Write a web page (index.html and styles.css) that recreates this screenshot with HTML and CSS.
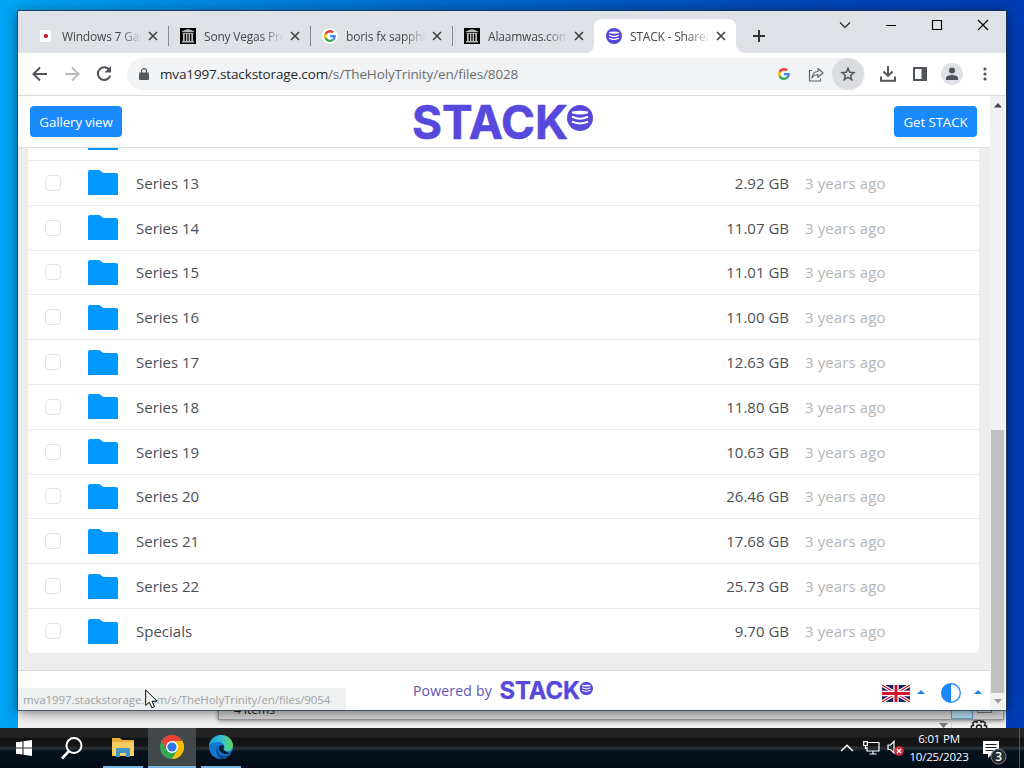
FILE: index.html
```html
<!DOCTYPE html>
<html lang="en">
  <head>
    <meta charset="utf-8">
    <title>STACK - Shared files</title>
    <link rel="stylesheet" href="styles.css">
  </head>
  <body>
    <!-- shared icons -->
    <svg class="defs" width="0" height="0">
      <symbol id="disc" viewBox="0 0 26 26">
        <circle cx="13" cy="13" r="13" fill="#5749dc"/>
        <path d="M5 6.500Q13 4.800 21 6.500V8.200Q13 10.600 5 8.200Z" fill="#fff"/>
        <path d="M5 11.800L9.500 13.300Q13 14 16.500 13.300L21 11.800M5 16.600L9.500 18.100Q13 18.800 16.500 18.100L21 16.600" fill="none" stroke="#fff" stroke-width="2"/>
      </symbol>
      <symbol id="logo" viewBox="0 0 180 36">
        <text x="-1" y="34.500" textLength="156" lengthAdjust="spacingAndGlyphs" font-family="Inter, Liberation Sans, sans-serif" font-weight="700" font-size="47" fill="#5749dc" stroke="#5749dc" stroke-width=".6">STACK</text>
        <use href="#disc" x="154" y="1" width="26" height="26"/>
      </symbol>
      <symbol id="folder" viewBox="0 0 30 25">
        <path d="M0 25V2Q0 0 2 0H10.500Q12 0 13 1.300T16 3H28Q30 3 30 5V25Z" fill="#0098ff"/>
      </symbol>
      <symbol id="close" viewBox="0 0 10 10">
        <path d="M1 1L9 9M9 1L1 9" stroke="#3c4043" stroke-width="1.600"/>
      </symbol>
      <symbol id="archive" viewBox="0 0 16 16">
        <path d="M0 0H16V16H0Z" fill="#000"/>
        <path d="M8 1L14 3.300V4H2V3.300ZM2.500 4.700H13.500V5.700H2.500ZM3 5.500H4.700V13H3ZM6 5.500H7.400V13H6ZM8.600 5.500H10V13H8.600ZM11.300 5.500H13V13H11.300ZM2 13H14V14.500H2Z" fill="#bbb"/>
      </symbol>
      <symbol id="google" viewBox="0 0 48 48">
        <path fill="#ea4335" d="M24 9.500c3.500 0 6.700 1.200 9.200 3.600l6.900-6.900C35.900 2.400 30.500 0 24 0 14.600 0 6.500 5.400 2.600 13.200l8 6.200C12.400 13.700 17.700 9.500 24 9.500z"/>
        <path fill="#4285f4" d="M47 24.500c0-1.600-.2-3.100-.4-4.500H24v9h12.900c-.6 3-2.300 5.500-4.800 7.200l7.700 6C44.400 38 47 31.800 47 24.500z"/>
        <path fill="#fbbc05" d="M10.500 28.600a14 14 0 0 1 0-9.200l-8-6.200a24 24 0 0 0 0 21.600z"/>
        <path fill="#34a853" d="M24 48c6.500 0 11.900-2.100 15.900-5.800l-7.700-6c-2.200 1.500-4.900 2.300-8.200 2.300-6.300 0-11.600-4.200-13.500-9.900l-8 6.200C6.500 42.600 14.600 48 24 48z"/>
      </symbol>
    </svg>

    <div class="explorer">
      <div class="explorer-front">
        <span class="items">4 items</span>
        <span class="view-details"></span>
        <span class="view-icons"></span>
      </div>
      <svg class="explorer-tools" width="66" height="24" viewBox="0 0 66 24">
        <path d="M0 3H9L4.500 8Z" fill="#777"/>
        <path d="M12.500 0V24" stroke="#ccc"/>
        <path d="M38.500 0h3l.6 2.200 2.100-1 2.200 2.200-1 2.100 2.200.6v3l-2.200.6 1 2.100-2.200 2.200-2.100-1-.6 2h-3l-.6-2-2.100 1-2.200-2.200 1-2.100-2.200-.6v-3l2.200-.6-1-2.100 2.200-2.200 2.100 1z" fill="none" stroke="#222" stroke-width="1.500"/>
        <circle cx="40" cy="7.500" r="2.500" fill="none" stroke="#222" stroke-width="1.500"/>
      </svg>
    </div>

    <div class="window">
      <div class="tabstrip">
        <div class="tab">
          <svg width="16" height="16"><path d="M2 2H13V14H2Z" fill="#fff"/><circle cx="8" cy="8" r="2.100" fill="#c8102e"/></svg>
          <span class="tab-title">Windows 7 Games</span>
          <svg width="10" height="10"><use href="#close"/></svg>
        </div>
        <div class="tab line">
          <svg width="16" height="16"><use href="#archive"/></svg>
          <span class="tab-title">Sony Vegas Pro 13</span>
          <svg width="10" height="10"><use href="#close"/></svg>
        </div>
        <div class="tab line">
          <svg width="16" height="16"><circle cx="8" cy="8" r="8" fill="#fff"/><use href="#google" x="2" y="2" width="12" height="12"/></svg>
          <span class="tab-title">boris fx sapphire</span>
          <svg width="10" height="10"><use href="#close"/></svg>
        </div>
        <div class="tab line">
          <svg width="16" height="16"><use href="#archive"/></svg>
          <span class="tab-title">Alaamwas.com</span>
          <svg width="10" height="10"><use href="#close"/></svg>
        </div>
        <div class="tab active">
          <svg width="16" height="16"><use href="#disc"/></svg>
          <span class="tab-title">STACK - Shared</span>
          <svg width="10" height="10"><use href="#close"/></svg>
        </div>
        <svg class="newtab" width="12" height="12"><path d="M6 0V12M0 6H12" stroke="#333" stroke-width="2"/></svg>
        <div class="controls">
          <svg width="12" height="12"><path d="M1 3.500L6 8.500L11 3.500" fill="none" stroke="#222" stroke-width="1.100"/></svg>
          <svg width="12" height="12"><path d="M1 6.500H11" stroke="#000"/></svg>
          <svg width="12" height="12"><path d="M1.500 1.500H10.500V10.500H1.500Z" fill="none" stroke="#000" stroke-width="1.200"/></svg>
          <svg width="12" height="12"><path d="M1 1L11 11M11 1L1 11" stroke="#000" stroke-width="1.200"/></svg>
        </div>
      </div>

      <div class="toolbar">
        <svg class="nav" width="16" height="16"><path d="M15 8H2M8 1.500L1.500 8L8 14.500" fill="none" stroke="#505357" stroke-width="2"/></svg>
        <svg class="nav" width="16" height="16"><path d="M1 8H14M8 1.500L14.500 8L8 14.500" fill="none" stroke="#babcbe" stroke-width="2"/></svg>
        <svg class="nav" width="16" height="16"><path d="M13.300 4A6.300 6.300 0 1 0 14.200 9.500" fill="none" stroke="#505357" stroke-width="2"/><path d="M15 0V6.500H8.500Z" fill="#505357"/></svg>
        <div class="address">
          <svg class="lock" width="10" height="12"><path d="M1 4.500H9Q10 4.500 10 5.500V11Q10 12 9 12H1Q0 12 0 11V5.500Q0 4.500 1 4.500Z" fill="#55585c"/><path d="M2.500 5V3a2.500 2.300 0 0 1 5 0V5" fill="none" stroke="#55585c" stroke-width="1.300"/></svg>
          <span class="url"><b>mva1997.stackstorage.com</b>/s/TheHolyTrinity/en/files/8028</span>
          <svg class="g" width="12" height="12"><use href="#google"/></svg>
          <svg class="share" width="16" height="15"><path d="M4 3.500H1.500V14H12.500V11.500" fill="none" stroke="#5f6368" stroke-width="1.200"/><path d="M4 11C4.500 7 6.500 4.500 10 4.500V1.500L15 6L10 10.300V7.500C7.500 7.500 5.500 8.500 4 11Z" fill="none" stroke="#5f6368" stroke-width="1.200" stroke-linejoin="round"/></svg>
          <span class="star"><svg width="16" height="16"><path d="M8 2.200L9.700 6.200L14 6.600L10.700 9.400L11.700 13.600L8 11.300L4.300 13.600L5.300 9.400L2 6.600L6.300 6.200Z" fill="none" stroke="#55585c" stroke-width="1.500"/></svg></span>
        </div>
        <svg class="download" width="16" height="16"><path d="M8 0V9M3.500 5.500L8 10L12.500 5.500M1 10.500V14.800H15V10.500" fill="none" stroke="#505357" stroke-width="1.900"/></svg>
        <svg class="panel" width="14" height="14"><path d="M1 1H13V13H1Z" fill="none" stroke="#505357" stroke-width="2"/><path d="M8.500 1H13V13H8.500Z" fill="#505357"/></svg>
        <svg class="avatar" width="22" height="22"><circle cx="11" cy="11" r="11" fill="#dee1e6"/><circle cx="11" cy="7.600" r="3" fill="#505357"/><path d="M5 17V14.800Q6 12 11 12T17 14.800V17Z" fill="#505357"/></svg>
        <svg class="dots" width="4" height="14"><g fill="#505357"><circle cx="2" cy="2" r="1.600"/><circle cx="2" cy="7" r="1.600"/><circle cx="2" cy="12" r="1.600"/></g></svg>
      </div>

      <div class="viewport">
        <div class="page">
          <div class="header">
            <button class="btn gallery">Gallery view</button>
            <svg class="brand" width="180" height="36"><use href="#logo"/></svg>
            <button class="btn get">Get STACK</button>
          </div>
          <div class="content">
            <div class="files">
              <div class="row cut">
                <svg class="folder" width="30" height="25"><use href="#folder"/></svg>
              </div>
              <div class="row">
                <span class="check"></span><svg class="folder" width="30" height="25"><use href="#folder"/></svg>
                <span class="name">Series 13</span><span class="size">2.92 GB</span><span class="date">3 years ago</span>
              </div>
              <div class="row">
                <span class="check"></span><svg class="folder" width="30" height="25"><use href="#folder"/></svg>
                <span class="name">Series 14</span><span class="size">11.07 GB</span><span class="date">3 years ago</span>
              </div>
              <div class="row">
                <span class="check"></span><svg class="folder" width="30" height="25"><use href="#folder"/></svg>
                <span class="name">Series 15</span><span class="size">11.01 GB</span><span class="date">3 years ago</span>
              </div>
              <div class="row">
                <span class="check"></span><svg class="folder" width="30" height="25"><use href="#folder"/></svg>
                <span class="name">Series 16</span><span class="size">11.00 GB</span><span class="date">3 years ago</span>
              </div>
              <div class="row">
                <span class="check"></span><svg class="folder" width="30" height="25"><use href="#folder"/></svg>
                <span class="name">Series 17</span><span class="size">12.63 GB</span><span class="date">3 years ago</span>
              </div>
              <div class="row">
                <span class="check"></span><svg class="folder" width="30" height="25"><use href="#folder"/></svg>
                <span class="name">Series 18</span><span class="size">11.80 GB</span><span class="date">3 years ago</span>
              </div>
              <div class="row">
                <span class="check"></span><svg class="folder" width="30" height="25"><use href="#folder"/></svg>
                <span class="name">Series 19</span><span class="size">10.63 GB</span><span class="date">3 years ago</span>
              </div>
              <div class="row">
                <span class="check"></span><svg class="folder" width="30" height="25"><use href="#folder"/></svg>
                <span class="name">Series 20</span><span class="size">26.46 GB</span><span class="date">3 years ago</span>
              </div>
              <div class="row">
                <span class="check"></span><svg class="folder" width="30" height="25"><use href="#folder"/></svg>
                <span class="name">Series 21</span><span class="size">17.68 GB</span><span class="date">3 years ago</span>
              </div>
              <div class="row">
                <span class="check"></span><svg class="folder" width="30" height="25"><use href="#folder"/></svg>
                <span class="name">Series 22</span><span class="size">25.73 GB</span><span class="date">3 years ago</span>
              </div>
              <div class="row">
                <span class="check"></span><svg class="folder" width="30" height="25"><use href="#folder"/></svg>
                <span class="name">Specials</span><span class="size">9.70 GB</span><span class="date">3 years ago</span>
              </div>
            </div>
          </div>
          <div class="footer">
            <span class="powered">Powered by</span>
            <svg class="brand-small" width="93" height="19"><use href="#logo"/></svg>
            <div class="settings">
              <svg width="28" height="17" viewBox="0 0 28 17">
                <path d="M0 0H28V17H0Z" fill="#20205f"/>
                <path d="M0 0L28 17M28 0L0 17" stroke="#fff" stroke-width="3.400"/>
                <path d="M0 0L28 17M28 0L0 17" stroke="#d0142c" stroke-width="1.200"/>
                <path d="M14 0V17M0 8.500H28" stroke="#fff" stroke-width="5.400"/>
                <path d="M14 0V17M0 8.500H28" stroke="#d0142c" stroke-width="3"/>
              </svg>
              <svg class="caret" width="8" height="4"><path d="M0 4L4 0L8 4Z" fill="#1c86e0"/></svg>
              <svg class="contrast" width="20" height="20"><circle cx="10" cy="10" r="9.300" fill="#fff" stroke="#1c88ff" stroke-width="1.300"/><path d="M10 .5A9.500 9.500 0 0 0 10 19.500Z" fill="#1c88ff"/></svg>
              <svg class="caret" width="8" height="4"><path d="M0 4L4 0L8 4Z" fill="#1c86e0"/></svg>
            </div>
          </div>
        </div>
        <div class="scrollbar">
          <svg width="8" height="5"><path d="M0 4.500L4 0L8 4.500Z" fill="#444"/></svg>
          <div class="thumb"></div>
          <svg width="8" height="5"><path d="M0 0L4 4.500L8 0Z" fill="#999"/></svg>
        </div>
      </div>
      <div class="status">mva1997.stackstorage.com/s/TheHolyTrinity/en/files/9054</div>
    </div>

    <div class="taskbar">
      <svg class="start" width="16" height="16"><path d="M0 2.300L6.500 1.400V7.500H0ZM7.500 1.200L16 0V7.500H7.500ZM0 8.500H6.500V14.600L0 13.700ZM7.500 8.500H16V16L7.500 14.800Z" fill="#fff"/></svg>
      <svg class="search" width="24" height="24"><circle cx="14" cy="9.500" r="7.500" fill="none" stroke="#fff" stroke-width="2"/><path d="M9 15L2 22.500" stroke="#fff" stroke-width="2.600"/></svg>
      <div class="app files-app">
        <svg width="22" height="19"><path d="M0 0H8L10 2H22V18H0Z" fill="#e8ae35"/><path d="M0 4H22V18H0Z" fill="#f8cd62"/><path d="M4 19V11Q4 10 5 10H17Q18 10 18 11V19H14V15H8V19Z" fill="#3f96c9"/></svg>
      </div>
      <div class="app current">
        <svg width="24" height="24" viewBox="0 0 24 24"><circle cx="12" cy="12" r="12" fill="#34a853"/><path d="M1.600 6A12 12 0 0 1 22.400 6H12L6.800 15Z" fill="#ea4335"/><path d="M22.400 6A12 12 0 0 1 12 24L17.200 15L12 6Z" fill="#fbbc05"/><circle cx="12" cy="12" r="6" fill="#fff"/><circle cx="12" cy="12" r="4.600" fill="#3376ea"/></svg>
      </div>
      <div class="app edge">
        <svg width="24" height="24" viewBox="0 0 24 24">
          <defs>
            <linearGradient id="eg" x1="0" x2="1"><stop stop-color="#1b9de2"/><stop offset=".55" stop-color="#35c1c9"/><stop offset="1" stop-color="#66d35a"/></linearGradient>
          </defs>
          <circle cx="12" cy="12" r="12" fill="#1478d0"/>
          <path d="M0 11C1 4 6 0 12 0C19 0 24 5 24 10.500C24 14 21.500 16 18.500 16C16 16 14.300 15 14.300 14C14.300 13.500 15.200 13 15.200 11.500C15.200 9 12.500 7 9 7C4.500 7 1 9 0 11Z" fill="url(#eg)"/>
          <path d="M9.500 11C7 15 10 22 17 20.500C19.500 20 21 19 22.500 17.500C20 22 16.500 24 12 24C7 22 5.500 14.500 9.500 11Z" fill="#0c4a94"/>
          <path d="M10 11.500C9 16 13 19.500 18 19C20.500 18.700 22 17.500 23.500 15.500L24 18L22 18.500Q16 17 14.300 14C14.300 13 15.200 13 15.200 11.500Q13 9 10 11.500Z" fill="#071c2c"/>
        </svg>
      </div>
      <div class="tray">
        <svg class="up" width="14" height="8"><path d="M1 7L7 1.200L13 7" fill="none" stroke="#fff" stroke-width="1.500"/></svg>
        <svg class="net" width="17" height="14"><path d="M5 1.500H16V10H4V6M10 10V13M6.500 13H13.500M.7.700H4.300V4.500H.7ZM2.500 4.500V7.500H4" fill="none" stroke="#fff" stroke-width="1.200"/></svg>
        <svg class="sound" width="17" height="16"><path d="M1 5H3.500L7 1.500V13L3.500 9.500H1Z" fill="none" stroke="#fff" stroke-width="1.200"/><circle cx="12" cy="11" r="4.800" fill="#d4303c"/><path d="M10 9L14 13M14 9L10 13" stroke="#fff" stroke-width="1.200"/></svg>
        <div class="clock"><span>6:01 PM</span><span>10/25/2023</span></div>
        <svg class="notify" width="26" height="26"><path d="M0 0H16V13H9L5 17V13H0Z" fill="#fff"/><path d="M2.500 3.500H13.500M2.500 6.500H13.500M2.500 9.500H10" stroke="#222"/><circle cx="15.500" cy="15.500" r="7.500" fill="#242a30" stroke="#7b8187"/><text x="12.300" y="20" font-family="Open Sans, sans-serif" font-size="12" font-weight="600" fill="#fff">3</text></svg>
      </div>
      <span class="peek"></span>
    </div>

    <svg class="cursor" width="13" height="20"><path d="M.7 1V16.500L4.300 13.200L6.800 18.800L9.500 17.600L7 12.200H12Z" fill="#fff" stroke="#000"/></svg>
  </body>
</html>
```
FILE: styles.css
```css
* {
  box-sizing: border-box;
}
body {
  margin: 0;
  width: 1024px;
  height: 768px;
  overflow: hidden;
  position: relative;
  font-family: "Open Sans", "Noto Sans", sans-serif;
  background: linear-gradient(90deg, #00a5f3 0, #0092e6 12%, #0067cb 45%, #0049b9 75%, #003cb3 100%);
}
svg {
  display: block;
  flex: none;
}
.defs {
  position: absolute;
}

/* Explorer window behind the browser */
.explorer {
  position: absolute;
  left: 18px;
  top: 600px;
  width: 988px;
  height: 140px;
  background: #f1f1f1;
}
.explorer-front {
  position: absolute;
  left: 200px;
  top: 0;
  width: 786px;
  height: 120px;
  padding: 0 2px 3px 15px;
  display: flex;
  align-items: flex-end;
  border: 1px solid #999;
  background: #d8d8d8;
  box-shadow: 0 1px 4px #888;
}
.items {
  flex: 1;
  font-size: 12px;
  line-height: 13px;
  color: #222;
}
.view-details {
  width: 22px;
  height: 20px;
  margin: 0 4px -3px 0;
  border: 1px solid #5aa0cc;
  background: #b8ddf0;
}
.view-icons {
  width: 15px;
  height: 12px;
  margin: 0 9px 3px 0;
  border: 1px solid #777;
}
.explorer-tools {
  position: absolute;
  left: 921px;
  top: 120px;
}

/* Browser window */
.window {
  position: absolute;
  left: 18px;
  top: 11px;
  width: 988px;
  height: 699px;
  display: flex;
  flex-direction: column;
  background: #fff;
  box-shadow: 0 0 0 1px rgba(30, 50, 70, 0.7), 0 2px 12px rgba(0, 0, 0, 0.55);
}
.tabstrip {
  height: 42px;
  padding: 8px 0 0 8px;
  display: flex;
  background: #dee1e6;
}
.tab {
  width: 142px;
  height: 34px;
  padding: 0 10px 0 12px;
  display: flex;
  align-items: center;
  position: relative;
}
.tab.line::before {
  content: "";
  position: absolute;
  left: 0;
  top: 7px;
  height: 20px;
  border-left: 1px solid #888b90;
}
.tab-title {
  flex: 1;
  width: 0;
  margin: 0 6px 0 8px;
  font-size: 12px;
  letter-spacing: -0.2px;
  white-space: nowrap;
  overflow: hidden;
  color: #45494d;
  -webkit-mask-image: linear-gradient(90deg, #000 72%, transparent 100%);
}
.tab.active {
  border-radius: 8px 8px 0 0;
  background: #fff;
}
.tab.active::before,
.tab.active::after {
  content: "";
  position: absolute;
  bottom: 0;
  width: 8px;
  height: 8px;
}
.tab.active::before {
  left: -8px;
  background: radial-gradient(circle at 0 0, #dee1e6 7.5px, #fff 8px);
}
.tab.active::after {
  right: -8px;
  background: radial-gradient(circle at 100% 0, #dee1e6 7.5px, #fff 8px);
}
.newtab {
  margin: 11px 0 0 17px;
}
.controls {
  margin-left: auto;
  padding-right: 17px;
  display: flex;
  gap: 34px;
}

.toolbar {
  height: 43px;
  padding-left: 14px;
  display: flex;
  align-items: center;
  border-bottom: 1px solid #d9dbde;
}
.nav {
  margin-right: 16px;
}
.address {
  width: 738px;
  height: 32px;
  margin-left: -1px;
  padding: 0 1px 0 12px;
  display: flex;
  align-items: center;
  border-radius: 16px;
  background: #f1f3f4;
}
.url {
  flex: 1;
  margin-left: 11px;
  font-size: 13.5px;
  letter-spacing: -0.14px;
  white-space: nowrap;
  color: #6a6e72;
}
.url b {
  font-weight: 400;
  color: #25282b;
}
.share {
  margin: 0 8px 0 18px;
}
.star {
  width: 32px;
  height: 32px;
  display: grid;
  place-items: center;
  border-radius: 50%;
  background: #dadcdf;
}
.download {
  margin-left: 15px;
}
.panel {
  margin-left: 17px;
}
.avatar {
  margin-left: 14px;
}
.dots {
  margin-left: 20px;
}

/* Web page */
.viewport {
  height: 614px;
  display: flex;
}
.page {
  width: 972px;
  display: flex;
  flex-direction: column;
  background: #ededed;
}
.header {
  height: 52px;
  padding: 0 13px 0 12px;
  display: flex;
  justify-content: space-between;
  align-items: center;
  border-bottom: 1px solid #ddd;
  background: #fff;
}
.btn {
  height: 31px;
  padding: 0;
  border: 0;
  border-radius: 4px;
  font: 13.3px "Open Sans", sans-serif;
  letter-spacing: -0.1px;
  color: #fff;
  background: #1a89fb;
}
.gallery {
  width: 92px;
}
.get {
  width: 83px;
}
.brand {
  margin-left: -11px;
}
.content {
  height: 522px;
  padding: 0 11px 17px 10px;
  display: flex;
  overflow: hidden;
}
.files {
  flex: 1;
  display: flex;
  flex-direction: column;
  border-radius: 0 0 4px 4px;
  background: #fff;
}
.row {
  height: 44.8px;
  flex: none;
  padding-left: 17px;
  display: flex;
  align-items: center;
  border-bottom: 1px solid #e9e9e9;
  font-size: 15px;
  color: #4c5056;
}
.row:last-child {
  border-bottom: 0;
}
.row.cut {
  height: 13px;
  padding-left: 60px;
  overflow: hidden;
  align-items: flex-start;
}
.cut .folder {
  margin-top: -23px;
}
.check {
  width: 16px;
  height: 16px;
  margin-right: 27px;
  border: 1px solid #e2e2e7;
  border-radius: 4px;
}
.name {
  flex: 1;
  margin-left: 18px;
}
.size {
  margin-right: 16px;
}
.date {
  width: 174px;
  letter-spacing: 0.1px;
  color: #b5b5b5;
}
.footer {
  height: 40px;
  padding: 0 8px 0 395px;
  display: flex;
  align-items: center;
  border-top: 1px solid #ddd;
  background: #fff;
}
.powered {
  width: 79px;
  font-size: 14px;
  font-weight: 500;
  letter-spacing: 0.2px;
  white-space: nowrap;
  color: #5d52ba;
}
.brand-small {
  margin-left: 8px;
}
.settings {
  margin: 5px 0 0 auto;
  display: flex;
  align-items: center;
}
.caret {
  margin: -3px 0 0 7px;
}
.contrast {
  margin: 0 6px 0 16px;
}
.scrollbar {
  width: 15px;
  padding: 7px 0 6px;
  display: flex;
  flex-direction: column;
  align-items: center;
  background: #f1f1f1;
}
.thumb {
  width: 13px;
  height: 263px;
  margin: auto 0 6px;
  background: #c1c1c1;
}
.status {
  position: absolute;
  left: 0;
  bottom: 0;
  width: 328px;
  height: 22px;
  padding-left: 5px;
  font-size: 11.5px;
  letter-spacing: -0.08px;
  line-height: 24px;
  white-space: nowrap;
  color: #a0a3a5;
  background: #eff0f0;
}

/* Taskbar */
.taskbar {
  position: absolute;
  left: 0;
  top: 728px;
  width: 1024px;
  height: 40px;
  display: flex;
  align-items: center;
  background: linear-gradient(#232323 0, #232323 9px, #121416 10px, #121416 18px, #292d30 19px, #292d30 21px, #04121c 23px, #020c18 100%);
}
.start {
  margin-left: 16px;
}
.search {
  margin-left: 28px;
}
.app {
  width: 40px;
  height: 40px;
  display: grid;
  place-items: center;
  border-bottom: 2px solid #76b5e6;
}
.files-app {
  margin-left: 19px;
}
.current {
  width: 48px;
  margin: 0 5px;
  background: #42474a;
}
.tray {
  margin-left: auto;
  display: flex;
  align-items: center;
}
.net {
  margin-left: 9px;
}
.sound {
  margin-left: 7px;
}
.clock {
  width: 60px;
  margin: 0 14px 0 5px;
  display: flex;
  flex-direction: column;
  align-items: center;
  font-size: 11.5px;
  line-height: 18px;
  letter-spacing: -0.2px;
  white-space: nowrap;
  color: #fff;
}
.notify {
  margin-top: 12px;
}
.peek {
  width: 5px;
  height: 40px;
  margin-left: 10px;
  border-left: 1px solid #4b5660;
}
.cursor {
  position: absolute;
  left: 145px;
  top: 689px;
}
```
